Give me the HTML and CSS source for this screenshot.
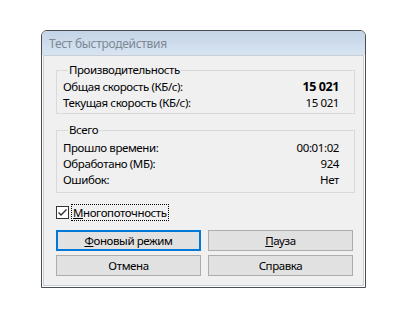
FILE: index.html
```html
<!DOCTYPE html>
<html lang="ru">
<head>
<meta charset="utf-8">
<title>Тест быстродействия</title>
<link rel="stylesheet" href="styles.css">
</head>
<body>
<div class="window">
  <div class="titlebar"><span class="title">Тест быстродействия</span></div>
  <div class="client">
    <fieldset class="group perf">
      <legend>Производительность</legend>
      <div class="row"><span>Общая скорость (КБ/с):</span><span class="val bold">15 021</span></div>
      <div class="row"><span>Текущая скорость (КБ/с):</span><span class="val">15 021</span></div>
    </fieldset>
    <fieldset class="group total">
      <legend>Всего</legend>
      <div class="row"><span>Прошло времени:</span><span class="val">00:01:02</span></div>
      <div class="row"><span>Обработано (МБ):</span><span class="val">924</span></div>
      <div class="row"><span>Ошибок:</span><span class="val">Нет</span></div>
    </fieldset>
    <label class="check">
      <span class="box"><svg width="11" height="11" viewBox="0 0 11 11"><path d="M1.5 5.5 L4 8 L9.5 2.5" fill="none" stroke="#2b2b2b" stroke-width="1.3"/></svg></span>
      <span class="focus"><u>М</u>ногопоточность</span>
    </label>
    <div class="buttons">
      <button class="btn default"><u>Ф</u>оновый режим</button>
      <button class="btn"><u>П</u>ауза</button>
      <button class="btn">Отмена</button>
      <button class="btn">Справка</button>
    </div>
  </div>
</div>
</body>
</html>
```
FILE: styles.css
```css
html, body {
  margin: 0;
  background: #ffffff;
}
body {
  padding: 30px 0 0 41px;
  font-family: "Noto Sans", "Open Sans", sans-serif;
  font-size: 11.5px;
  letter-spacing: -0.4px;
  color: #000;
}
.window {
  width: 321px;
  height: 255px;
  border: 1px solid #4a4d52;
  border-radius: 6px 6px 0 0;
  background: #ffffff;
  padding: 0 1px 1px;
  display: flex;
  flex-direction: column;
  overflow: hidden;
}
.titlebar {
  height: 24px;
  margin: 0 -1px;
  background: linear-gradient(#c3d4e7, #d8e4f1);
  display: flex;
  align-items: center;
  padding-left: 7px;
}
.title {
  color: #7d8893;
  font-size: 12px;
  letter-spacing: -0.3px;
}
.client {
  flex: 1;
  background: #f0f0f0;
  border: 1px solid #c6ced8;
  padding: 6px 8px 0 12px;
}
.group {
  margin: 0;
  border: 1px solid #d9d9d9;
  padding: 1px 15px 2px 6px;
  min-width: 0;
}
.group legend {
  padding: 0 1px;
  margin-left: 5px;
  line-height: 16px;
}
.total {
  margin-top: 8px;
  padding-top: 2px;
  padding-bottom: 4px;
}
.row {
  display: flex;
  justify-content: space-between;
  line-height: 16px;
  height: 16px;
}
.bold {
  font-weight: bold;
  font-size: 12.5px;
}
.check {
  display: flex;
  align-items: center;
  margin-top: 11px;
  height: 16px;
}
.box {
  width: 11px;
  height: 11px;
  border: 1px solid #333;
  background: #fff;
  display: flex;
}
.focus {
  margin-left: 3px;
  outline: 1px dotted #000;
  line-height: 15px;
  padding: 0 1px;
}
.buttons {
  margin-top: 10px;
  display: grid;
  grid-template-columns: 145px 145px;
  column-gap: 7px;
  row-gap: 4px;
}
.btn {
  height: 21px;
  margin: 0;
  padding: 0;
  font: inherit;
  letter-spacing: inherit;
  color: #000;
  background: #e1e1e1;
  border: 1px solid #adadad;
}
.btn.default {
  border: 2px solid #0078d7;
}
u {
  text-decoration-thickness: 1px;
}
```
